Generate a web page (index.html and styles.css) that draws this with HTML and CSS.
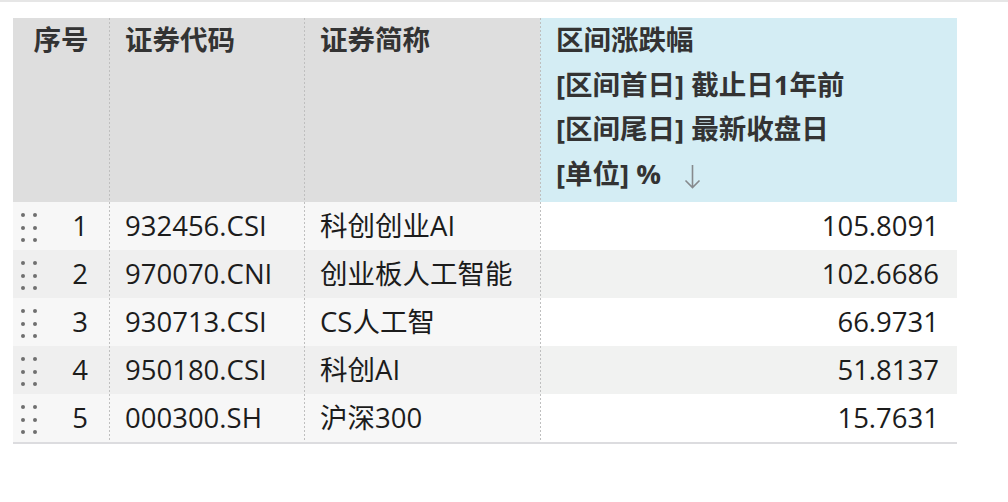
FILE: index.html
```html
<!DOCTYPE html>
<html lang="zh">
<head>
<meta charset="utf-8">
<title>区间涨跌幅</title>
<link rel="stylesheet" href="styles.css">
</head>
<body>
<div class="topbar"></div>
<div class="wrap">
  <table class="grid">
    <colgroup>
      <col class="c-idx"><col class="c-code"><col class="c-name"><col class="c-val">
    </colgroup>
    <thead>
      <tr>
        <th class="h idx-h">序号</th>
        <th class="h sep">证券代码</th>
        <th class="h sep">证券简称</th>
        <th class="h sep val-h">
          <div>区间涨跌幅</div>
          <div>[区间首日] 截止日1年前</div>
          <div>[区间尾日] 最新收盘日</div>
          <div class="unit">[单位] % <svg class="arrow" width="17" height="25" viewBox="0 0 17 25"><path d="M8.5 1V23.5M1.5 16.5L8.5 23.5L15.5 16.5" fill="none" stroke="#868a8d" stroke-width="1.6"/></svg></div>
        </th>
      </tr>
    </thead>
    <tbody>
      <tr class="odd">
        <td class="idx"><span class="handle"><i></i><i></i><i></i><i></i><i></i><i></i></span><span>1</span></td>
        <td class="sep">932456.CSI</td>
        <td class="sep">科创创业AI</td>
        <td class="sep num">105.8091</td>
      </tr>
      <tr class="even">
        <td class="idx"><span class="handle"><i></i><i></i><i></i><i></i><i></i><i></i></span><span>2</span></td>
        <td class="sep">970070.CNI</td>
        <td class="sep">创业板人工智能</td>
        <td class="sep num">102.6686</td>
      </tr>
      <tr class="odd">
        <td class="idx"><span class="handle"><i></i><i></i><i></i><i></i><i></i><i></i></span><span>3</span></td>
        <td class="sep">930713.CSI</td>
        <td class="sep">CS人工智</td>
        <td class="sep num">66.9731</td>
      </tr>
      <tr class="even">
        <td class="idx"><span class="handle"><i></i><i></i><i></i><i></i><i></i><i></i></span><span>4</span></td>
        <td class="sep">950180.CSI</td>
        <td class="sep">科创AI</td>
        <td class="sep num">51.8137</td>
      </tr>
      <tr class="odd last">
        <td class="idx"><span class="handle"><i></i><i></i><i></i><i></i><i></i><i></i></span><span>5</span></td>
        <td class="sep">000300.SH</td>
        <td class="sep">沪深300</td>
        <td class="sep num">15.7631</td>
      </tr>
    </tbody>
  </table>
</div>
</body>
</html>
```

FILE: styles.css
```css
html, body {
  margin: 0;
  padding: 0;
  background: #ffffff;
}
body {
  font-family: "Open Sans", "Noto Sans CJK SC", sans-serif;
  font-size: 27.5px;
  color: #1c1c1c;
}
.topbar {
  height: 2px;
  background: #e6e6e6;
}
.wrap {
  padding: 16px 13px 0 13px;
}
.grid {
  border-collapse: collapse;
  table-layout: fixed;
  width: 944px;
  border-bottom: 2px solid #dcdcdf;
}
.c-idx { width: 96px; }
.c-code { width: 195px; }
.c-name { width: 236px; }
.c-val { width: 417px; }

.grid th, .grid td {
  padding: 0;
  white-space: nowrap;
}
.sep {
  background-image: linear-gradient(to bottom, #bfbfbf 50%, transparent 50%);
  background-size: 1px 4px;
  background-repeat: repeat-y;
  background-position: left top;
}
.grid th.h {
  height: 184px;
  vertical-align: top;
  text-align: left;
  font-weight: 700;
  color: #333333;
  line-height: 44.6px;
  padding: 0 0 0 16px;
  background-color: #dedede;
}
.grid th.idx-h {
  text-align: center;
  padding: 0;
}
.grid th.val-h {
  background-color: #d4edf4;
}
.unit {
  display: flex;
  align-items: center;
}
.arrow {
  margin-left: 23px;
  margin-top: 4px;
}

.grid td {
  height: 48px;
  line-height: 48px;
  padding-left: 16px;
}
.odd td { background-color: #f7f7f7; }
.even td { background-color: #efefef; }
.odd td.num { background-color: #ffffff; }
.even td.num { background-color: #f1f2f1; }

.grid td.idx {
  padding: 0 21px 0 8px;
}
.idx {
  display: flex;
  align-items: center;
  justify-content: space-between;
}
.handle {
  display: grid;
  grid-template-columns: 4px 4px;
  column-gap: 8px;
  row-gap: 8.5px;
  margin-top: 3px;
}
.handle i {
  display: block;
  width: 4px;
  height: 4px;
  border-radius: 50%;
  background: #6f6f6f;
}
.grid td.num {
  text-align: right;
  padding: 0 18px 0 0;
}
```
